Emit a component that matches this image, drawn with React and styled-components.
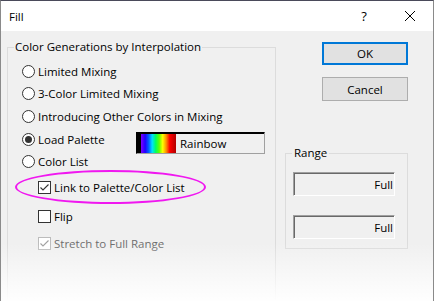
import React from 'react'
import styled, { createGlobalStyle } from 'styled-components'

const GlobalStyle = createGlobalStyle`
  html, body {
    margin: 0;
    padding: 0;
    background: #fff;
  }
  * {
    box-sizing: border-box;
  }
`

const FONT = `"Open Sans", "Noto Sans", sans-serif`

const Window = styled.div`
  position: relative;
  width: 434px;
  height: 301px;
  overflow: hidden;
  display: flex;
  flex-direction: column;
  border: 1px solid #8a8a8a;
  border-top-color: #4a4a5a;
  border-bottom: none;
  background: #f0f0f0;
  font-family: ${FONT};
  font-size: 11.5px;
  color: #000;
`

const TitleBar = styled.div`
  display: flex;
  align-items: center;
  height: 30px;
  flex: none;
  padding-left: 8px;
  background: #fff;
`

const Title = styled.div`
  flex: 1;
  font-size: 11.5px;
`

const CaptionButton = styled.div`
  width: 46px;
  height: 30px;
  display: flex;
  align-items: center;
  justify-content: center;
  font-size: 13px;
`

const Body = styled.div`
  display: flex;
  flex: 1;
  padding-left: 6px;
`

const Group = styled.fieldset`
  margin: ${p => p.$top}px 0 0 0;
  padding: 0 0 0 6px;
  width: ${p => p.$w}px;
  height: ${p => p.$h}px;
  min-inline-size: 0;
  border: 1px solid #dcdcdc;
  flex: none;
`

const Legend = styled.legend`
  padding: 0 ${p => p.$pad}px;
  line-height: 16px;
  font-size: 11.5px;
`

const Options = styled.div`
  display: flex;
  flex-direction: column;
  padding: 5px 0 0 8px;
`

const Row = styled.div`
  position: relative;
  display: flex;
  align-items: center;
  height: ${p => p.$h}px;
  padding-left: ${p => (p.$indent ? 16 : 0)}px;
  color: ${p => (p.$disabled ? '#6d6d6d' : '#000')};
`

const Radio = styled.span`
  width: 13px;
  height: 13px;
  margin-right: 3px;
  border-radius: 50%;
  border: 1px solid #333;
  background: #fff;
  display: flex;
  align-items: center;
  justify-content: center;
  flex: none;

  &::after {
    content: '';
    width: 7px;
    height: 7px;
    border-radius: 50%;
    background: ${p => (p.$checked ? '#333' : 'transparent')};
  }
`

const Box = styled.span`
  width: 13px;
  height: 13px;
  margin-right: 3px;
  border: 1px solid ${p => (p.$disabled ? '#bcbcbc' : '#333')};
  background: #fff;
  display: flex;
  flex: none;

  svg {
    display: block;
  }
`

const PaletteBox = styled.div`
  align-self: flex-start;
  margin: 4px 10px 0 auto;
  width: 129px;
  height: 22px;
  display: flex;
  align-items: stretch;
  border: 1px solid;
  border-color: #000 #a0a0a0 #a0a0a0 #000;
  box-shadow: inset 1px 1px 0 #000;
  background: #f0f0f0;
  padding: 1px 0 0 1px;
`

const Swatch = styled.div`
  width: 38px;
  border-left: 3px solid #000;
  background: linear-gradient(
    to right,
    #8000ff 0%,
    #2000ff 12%,
    #0060ff 22%,
    #00e0ff 32%,
    #00ff60 42%,
    #60ff00 52%,
    #ffff00 62%,
    #ff9000 72%,
    #ff0000 82%,
    #b00000 100%
  );
`

const PaletteName = styled.span`
  display: flex;
  align-items: center;
  padding-left: 4px;
`

const Annotation = styled.span`
  position: absolute;
  left: -7px;
  top: -2px;
  width: 191px;
  height: 34px;
  border: 2px solid #f018f0;
  border-radius: 50%;
  pointer-events: none;
`

const RightColumn = styled.div`
  display: flex;
  flex-direction: column;
  width: 123px;
  margin-left: 9px;
  flex: none;
`

const Button = styled.div`
  align-self: flex-end;
  width: 86px;
  height: ${p => p.$h}px;
  margin-top: ${p => p.$top}px;
  display: flex;
  align-items: center;
  justify-content: center;
  background: #e1e1e1;
  border: ${p => (p.$default ? '2px solid #0078d7' : '1px solid #adadad')};
`

const Fields = styled.div`
  display: flex;
  flex-direction: column;
  gap: 19px;
  padding: 11px 0 0 1px;
`

const Field = styled.div`
  width: 102px;
  height: 24px;
  display: flex;
  align-items: center;
  justify-content: flex-end;
  padding-right: 1px;
  border: 1px solid;
  border-color: #a0a0a0 #fff #fff #a0a0a0;
  box-shadow: inset 1px 1px 0 #696969;
`

const Fade = styled.div`
  position: absolute;
  left: -1px;
  right: -1px;
  bottom: 0;
  height: 58px;
  background: linear-gradient(to bottom, rgba(255, 255, 255, 0), rgba(255, 255, 255, 0.97));
  pointer-events: none;
`

const Check = ({ color = '#333' }) => (
  <svg width="11" height="11" viewBox="0 0 11 11">
    <polyline points="1.5,5.5 4,8 9.5,2.5" fill="none" stroke={color} strokeWidth="1.1" />
  </svg>
)

const CheckBox = ({ checked, disabled }) => (
  <Box $disabled={disabled}>{checked && <Check color={disabled ? '#a0a0a0' : '#333'} />}</Box>
)

const radios = [
  { label: 'Limited Mixing', h: 22 },
  { label: '3-Color Limited Mixing', h: 23 },
  { label: 'Introducing Other Colors in Mixing', h: 23 },
]

export default function App() {
  return (
    <>
      <GlobalStyle />
      <Window>
        <TitleBar>
          <Title>Fill</Title>
          <CaptionButton>?</CaptionButton>
          <CaptionButton>
            <svg width="10" height="10" viewBox="0 0 10 10">
              <path d="M0 0L10 10M10 0L0 10" stroke="#000" strokeWidth="1" />
            </svg>
          </CaptionButton>
        </TitleBar>
        <Body>
          <Group $top={8} $w={269} $h={290}>
            <Legend $pad={1}>Color Generations by Interpolation</Legend>
            <Options>
              {radios.map(r => (
                <Row key={r.label} $h={r.h}>
                  <Radio />
                  {r.label}
                </Row>
              ))}
              <Row $h={22}>
                <Radio $checked />
                Load Palette
                <PaletteBox>
                  <Swatch />
                  <PaletteName>Rainbow</PaletteName>
                </PaletteBox>
              </Row>
              <Row $h={22}>
                <Radio />
                Color List
              </Row>
              <Row $h={30} $indent>
                <CheckBox checked />
                Link to Palette/Color List
                <Annotation />
              </Row>
              <Row $h={28} $indent>
                <CheckBox />
                Flip
              </Row>
              <Row $h={26} $indent $disabled>
                <CheckBox checked disabled />
                Stretch to Full Range
              </Row>
            </Options>
          </Group>
          <RightColumn>
            <Button $default $top={11} $h={23}>OK</Button>
            <Button $top={12} $h={24}>Cancel</Button>
            <Group $top={44} $w={123} $h={104}>
              <Legend $pad={2}>Range</Legend>
              <Fields>
                <Field>Full</Field>
                <Field>Full</Field>
              </Fields>
            </Group>
          </RightColumn>
        </Body>
        <Fade />
      </Window>
    </>
  )
}
